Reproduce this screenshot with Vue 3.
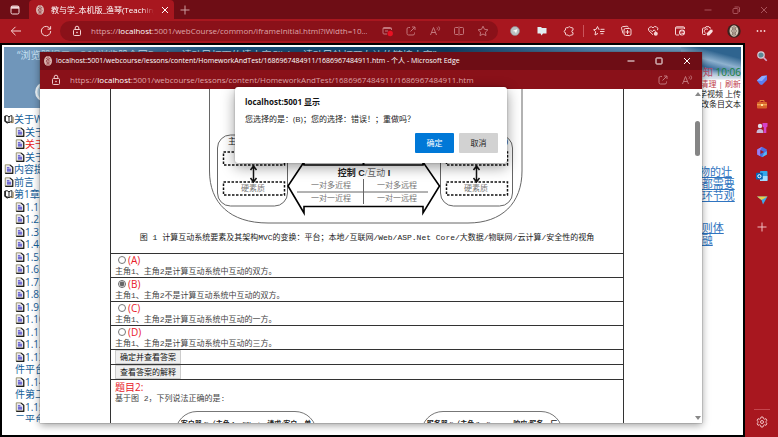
<script setup>
import { ref } from 'vue'

const picked = ref('B')

const tree = [
  { icon: 'book', level: 0, text: '关于Web' },
  { icon: 'page', level: 1, text: '关于课程' },
  { icon: 'page', level: 1, text: '关于作者', active: true },
  { icon: 'page', level: 1, text: '关于版权' },
  { icon: 'page', level: 0, text: '内容提要' },
  { icon: 'page', level: 0, text: '前言' },
  { icon: 'book', level: 0, text: '第1章' },
  { icon: 'page', level: 1, text: '1.1' },
  { icon: 'page', level: 1, text: '1.2.' },
  { icon: 'page', level: 1, text: '1.3' },
  { icon: 'page', level: 1, text: '1.4.' },
  { icon: 'page', level: 1, text: '1.5.' },
  { icon: 'page', level: 1, text: '1.6.' },
  { icon: 'page', level: 1, text: '1.7.' },
  { icon: 'page', level: 1, text: '1.8.' },
  { icon: 'page', level: 1, text: '1.9.' },
  { icon: 'page', level: 1, text: '1.10' },
  { icon: 'page', level: 1, text: '1.11' },
  { icon: 'page', level: 1, text: '1.12' },
  { icon: 'page', level: 1, text: '1.13' },
  { icon: '', level: 1, text: '件平台' },
  { icon: 'page', level: 1, text: '1.14' },
  { icon: '', level: 1, text: '件第二' },
  { icon: 'page', level: 1, text: '1.15' },
  { icon: '', level: 1, text: '二平台' }
]

const options = [
  { key: 'A', text: '主角1、主角2是计算互动系统中互动的双方。' },
  { key: 'B', text: '主角1、主角2不是计算互动系统中互动的双方。' },
  { key: 'C', text: '主角1、主角2是计算互动系统中互动的一方。' },
  { key: 'D', text: '主角1、主角2是计算互动系统中互动的三方。' }
]

const tools = ['clip', 'chat', 'puzzle', 'bar', 'favs', 'collect', 'heart', 'eframe', 'tagshot', 'avatar', 'dots']
const sideTools = ['search', 'tag', 'toolbox', 'people', 'office', 'outlook', 'drop', 'plus']
</script>

<template>
  <div class="browser">
    <svg class="defs" aria-hidden="true">
      <symbol id="i-tabs" viewBox="0 0 12 12"><rect x="2" y="2" width="8" height="8" rx="1.500" /><path d="M2 3.500h8" stroke-width="2.400" /></symbol>
      <symbol id="i-globe" viewBox="0 0 12 12"><ellipse cx="6" cy="6" rx="4" ry="5" fill="#d9b3ae" stroke="none" /><path d="M4 3l1.500 1.500L4 6l1.500 2L4.500 9.500M8 3L6.500 5 8 6.500 6.500 8 7.500 9.500M6 1v10" stroke="#8a3238" stroke-width=".7" /></symbol>
      <symbol id="i-close" viewBox="0 0 12 12"><path d="M3 3l6 6M9 3l-6 6" /></symbol>
      <symbol id="i-plus" viewBox="0 0 12 12"><path d="M6 1.500v9M1.500 6h9" /></symbol>
      <symbol id="i-min" viewBox="0 0 12 12"><path d="M2.500 6h7" /></symbol>
      <symbol id="i-max" viewBox="0 0 12 12"><rect x="3" y="3" width="6" height="6" rx=".6" /></symbol>
      <symbol id="i-restore" viewBox="0 0 12 12"><rect x="3" y="4.500" width="5" height="5" rx="1" /><path d="M4.500 3h4a1 1 0 0 1 1 1v4" /></symbol>
      <symbol id="i-back" viewBox="0 0 12 12"><path d="M11 6H1.500M5.500 1.800L1.300 6l4.200 4.200" /></symbol>
      <symbol id="i-reload" viewBox="0 0 12 12"><path d="M10.200 4A4.700 4.700 0 1 0 10.700 6M10.600 1.200V4.200H7.600" /></symbol>
      <symbol id="i-lock" viewBox="0 0 12 12"><rect x="2.500" y="4.500" width="7" height="6" rx="1" /><path d="M4.200 4.500V3a1.800 1.800 0 0 1 3.600 0v1.500" /><circle cx="6" cy="7.500" r=".5" /></symbol>
      <symbol id="i-blocked" viewBox="0 0 12 12"><path d="M6 9H3a1 1 0 0 1-1-1V3.500a1 1 0 0 1 1-1h6.500a1 1 0 0 1 1 1V5M2 3.500h8.500M4 6h3" /><circle cx="9.200" cy="8.500" r="2.700" fill="#e81123" stroke="none" /></symbol>
      <symbol id="i-share" viewBox="0 0 12 12"><path d="M5 2.500H3.500a1.500 1.500 0 0 0-1.500 1.500v4.500A1.500 1.500 0 0 0 3.500 10H8a1.500 1.500 0 0 0 1.500-1.500V7.500M7 2h3v3M10 2L5.500 6.500" /></symbol>
      <symbol id="i-read" viewBox="0 0 12 12"><path d="M1.500 10L4.500 2.500 7.500 10M2.600 7.500h3.800M8 2.500q1 1 0 2.200M9.700 1.500q1.800 2 0 4.200" /></symbol>
      <symbol id="i-split" viewBox="0 0 12 12"><path d="M5 2.500H2.500a1 1 0 0 0-1 1v5a1 1 0 0 0 1 1H5M7 2.500h2.500a1 1 0 0 1 1 1v5a1 1 0 0 1-1 1H7M6 1.500v9" /></symbol>
      <symbol id="i-star" viewBox="0 0 12 12"><path d="M6 1.200l1.500 3.100 3.400.5-2.500 2.400.6 3.400L6 9l-3 1.600.6-3.400L1.100 4.800l3.400-.5z" /></symbol>
      <symbol id="i-clip" viewBox="0 0 12 12"><circle cx="6" cy="6" r="4.500" fill="#b9c0c1" stroke="#8e8789" stroke-width=".6" /><path d="M3.500 6l5-2-1.500 4.500L6 6.500z" fill="#fff" stroke="none" /></symbol>
      <symbol id="i-chat" viewBox="0 0 12 12"><path d="M2 2h3l1 1h4.500v5.500H7L5.500 10.500 4.500 8.500H1.500V2z" fill="#e1eef2" stroke="none" /></symbol>
      <symbol id="i-puzzle" viewBox="0 0 12 12"><path d="M3.500 2.700H5a1.500 1.500 0 0 1 2.800 0H9a1 1 0 0 1 1 1V5.200a1.200 1.200 0 1 0 0 2.400V9a1 1 0 0 1-1 1H7.600a1.300 1.300 0 0 1-2.500 0H3.500a1 1 0 0 1-1-1V7.700a1.300 1.300 0 0 1 0-2.600V3.700a1 1 0 0 1 1-1z" /></symbol>
      <symbol id="i-favs" viewBox="0 0 12 12"><path d="M6.500 4.300H5.700L4.500 1.500 3.200 4.300.6 4.700 2.600 6.700 2 10l3-1.600M7.500 4.300h4M7 6.500h4.500M7.500 8.700h3" /></symbol>
      <symbol id="i-collect" viewBox="0 0 12 12"><path d="M3 8.500L1.500 3.200Q1.300 2 2.500 1.700L7 1.200Q8 1.200 8.300 2.500" /><rect x="4" y="3.500" width="7" height="7" rx="1.500" /><path d="M7.500 5v4M5.500 7h4" /></symbol>
      <symbol id="i-heart" viewBox="0 0 12 12"><path d="M6 9.800L1.900 5.800A2.500 2.500 0 0 1 6 2.900a2.500 2.500 0 0 1 4.500 2.300M3.300 4.800l2 2 1.800-2 1.800 2" /><circle cx="8.800" cy="8.700" r="2" fill="#f5d2d2" stroke="none" /></symbol>
      <symbol id="i-eframe" viewBox="0 0 12 12"><path d="M5 10H2.500a1 1 0 0 1-1-1V2.800a1 1 0 0 1 1-1h7a1 1 0 0 1 1 1V4M1.500 3h9" /><circle cx="8" cy="7.500" r="3" fill="#f8dede" stroke="none" /><path d="M6.500 7.500h3Q9.300 6 8 6T6.600 7.600 8 9.200h1.200" stroke="#a8171f" stroke-width=".8" /></symbol>
      <symbol id="i-tagshot" viewBox="0 0 12 12"><path d="M4.500 9.500H2.500a1 1 0 0 1-1-1V4a1 1 0 0 1 1-1h1.700l.8-1.300h3L8.800 3h1.200M7 4.500A2.200 2.200 0 1 0 5.500 8.300" /><path d="M6 8l3.500-3.500 2 .2.200 2L8.200 10.500H6z" fill="#f8dede" stroke="none" /></symbol>
      <symbol id="i-avatar" viewBox="0 0 14 14"><circle cx="7" cy="7" r="6.700" fill="#39221e" stroke="none" /><ellipse cx="7" cy="7" rx="4.500" ry="5.700" fill="#d5cbbb" stroke="none" /><path d="M5 3l1 2-1.500 2L6 9l-1 2.500M9 3L8 5l1.500 2L8 9l1 2.500M7 2v10" stroke="#6f5850" stroke-width=".8" /></symbol>
      <symbol id="i-dots" viewBox="0 0 12 12"><g fill="#f6d5d5" stroke="none"><circle cx="2.500" cy="6" r=".9" /><circle cx="6" cy="6" r=".9" /><circle cx="9.500" cy="6" r=".9" /></g></symbol>
      <symbol id="i-search" viewBox="0 0 12 12"><circle cx="5" cy="5" r="3.200" fill="#5b8794" stroke="#d8ccd5" stroke-width="1.200" /><path d="M7.500 7.500l3.200 3.200" stroke="#d7a9d0" stroke-width="1.600" /></symbol>
      <symbol id="i-tag" viewBox="0 0 12 12"><path d="M.8 6.500L6 2 11 1.500 11 6 6 11 4 10.500z" fill="#5a7df0" stroke="none" /><path d="M.8 6.500L6 2 11 1.500 6 7z" fill="#8fabff" stroke="none" /></symbol>
      <symbol id="i-toolbox" viewBox="0 0 12 12"><path d="M4 4V2.500h4V4" stroke="#e8833a" /><rect x="1" y="4" width="10" height="6.500" rx="1" fill="#d9632a" stroke="none" /><path d="M1 6.800h10" stroke="#f5bd62" /><rect x="5" y="6" width="2" height="2" fill="#ffe3a0" stroke="none" /></symbol>
      <symbol id="i-people" viewBox="0 0 12 12"><circle cx="4" cy="4" r="2.200" fill="#e1dce8" stroke="none" /><path d="M.5 11Q.5 7 4 7t3.500 4z" fill="#c6b9d6" stroke="none" /><path d="M6.500 1h5v3.500l-1.200 1V11H7.800V5.500l-1.300-1z" fill="#d542c8" stroke="none" /></symbol>
      <symbol id="i-office" viewBox="0 0 12 12"><path d="M6 .8l4.800 2.700v5L6 11.200 1.200 8.500v-5z" fill="#4d6fe3" stroke="none" /><path d="M6 .8L1.200 3.500v5L4 10V5z" fill="#9b7df0" stroke="none" /><path d="M4.500 3.900L8 6 4.500 8.100z" fill="#a8171f" stroke="none" /><path d="M6 11.200l4.800-2.700V5L8 7z" fill="#55b8f5" stroke="none" /></symbol>
      <symbol id="i-outlook" viewBox="0 0 12 12"><rect x="4" y="1" width="7.500" height="10" rx=".8" fill="#35a8ec" stroke="none" /><path d="M4 6h7.500v4.200a.8.800 0 0 1-.8.800H4z" fill="#a2dcff" stroke="none" /><rect x="0" y="2.800" width="6.800" height="6.800" rx=".8" fill="#0867b9" stroke="none" /><circle cx="3.400" cy="6.200" r="1.600" stroke="#fff" /></symbol>
      <symbol id="i-drop" viewBox="0 0 12 12"><path d="M1 2.500h10.500L7 10.500 5.500 6z" fill="#3fa7e8" stroke="none" /><path d="M1 2.500h10.500L5.500 6z" fill="#e9cf4b" stroke="none" /></symbol>
      <symbol id="i-gear" viewBox="0 0 12 12"><path d="M5 1h2l.4 1.600 1 .6 1.600-.5 1 1.800L9.800 5.600v.8L11 7.500l-1 1.800-1.600-.5-1 .6L7 11H5l-.4-1.600-1-.6-1.600.5-1-1.800L2.200 6.400v-.8L1 4.500l1-1.800 1.600.5 1-.6z" /><circle cx="6" cy="6" r="1.500" /></symbol>
      <symbol id="i-book" viewBox="0 0 12 12"><path d="M1 2.500Q4 1 6 3.500 7 2 9.500 2V9.500Q7 9 6 10.500 4 9 2.500 10L1 8.500z" fill="#fff" stroke="#222" stroke-width="1.200" /><path d="M1.500 2.500v6l3 2.500" stroke="#222" stroke-width="1.600" /><path d="M6 3.500v7" stroke="#222" stroke-width="1.200" /><path d="M8 10.300h3V3.500" stroke="#8a6a30" /></symbol>
      <symbol id="i-page" viewBox="0 0 12 12"><path d="M1.500 1H7L10.500 4V11H1.500z" fill="#eceaf0" stroke="#8a8458" stroke-width="1" /><path d="M7 1L10.500 4V11.300H1.500" stroke="#222" stroke-width="1.400" /><path d="M3.500 4.500h3M3.500 6.300h5M3.500 8.200h5" stroke="#4a44c8" stroke-width="1.300" /></symbol>
    </svg>

    <header class="tabstrip">
      <button class="ib" aria-label="Tab actions"><svg class="ic"><use href="#i-tabs" /></svg></button>
      <div class="tab">
        <svg class="ic"><use href="#i-globe" /></svg>
        <span class="tab-name">教与学_本机版_渔琴(Teaching&amp;L</span>
        <button class="ib" aria-label="Close tab"><svg class="ic"><use href="#i-close" /></svg></button>
      </div>
      <button class="ib add" aria-label="New tab"><svg class="ic"><use href="#i-plus" /></svg></button>
      <div class="win-ctl faded">
        <button class="ib" aria-label="Minimize"><svg class="ic"><use href="#i-min" /></svg></button>
        <button class="ib" aria-label="Restore"><svg class="ic"><use href="#i-restore" /></svg></button>
        <button class="ib" aria-label="Close"><svg class="ic"><use href="#i-close" /></svg></button>
      </div>
    </header>

    <nav class="toolbar">
      <button class="ib" aria-label="Back"><svg class="ic"><use href="#i-back" /></svg></button>
      <button class="ib" aria-label="Refresh"><svg class="ic"><use href="#i-reload" /></svg></button>
      <div class="address">
        <svg class="ic"><use href="#i-lock" /></svg>
        <span class="url">https://<b>localhost</b>:5001/webCourse/common/iframeInitial.html?iWidth=10...</span>
        <div class="addr-tools">
          <button v-for="n in ['blocked', 'share', 'read', 'split', 'star']" :key="n" class="ib" :aria-label="n"><svg class="ic"><use :href="'#i-' + n" /></svg></button>
        </div>
      </div>
      <div class="tools">
        <template v-for="n in tools" :key="n">
          <i v-if="n === 'bar'" class="bar"></i>
          <button v-else class="ib" :aria-label="n"><svg class="ic" :class="{ big: n === 'avatar' }"><use :href="'#i-' + n" /></svg></button>
        </template>
      </div>
    </nav>

    <div class="body">
      <main class="page">
        <div class="banner">
          <p class="slogan">“浏览器提示：361浏览器全网Book，请动导打下的情内容Click，请动导航打开左边的链接内容”</p>
          <svg class="emblem" viewBox="0 0 20 20"><circle cx="10" cy="10" r="8" fill="#b4d3e8" stroke="#f1f8fc" stroke-width="2" /><path d="M6 6l3 3-3 4M11 4v12" stroke="#f1f8fc" stroke-width="2" /></svg>
          <div class="status">
            <p class="clock"><span>通知</span> <time>10:06</time></p>
            <p class="links">清理 | 刷新</p>
            <p>教学视频 上传</p>
            <p>修改条目文本</p>
          </div>
        </div>
        <div class="columns">
          <ul class="tree">
            <li v-for="(t, i) in tree" :key="i" :class="{ child: t.level, active: t.active }">
              <svg v-if="t.icon" class="ti"><use :href="'#i-' + t.icon" /></svg><a href="#">{{ t.text }}</a>
            </li>
          </ul>
          <div class="article">
            <p><a href="#">物的壮<br>&nbsp;都需要<br>&nbsp;环节观</a></p>
            <p><a href="#">&nbsp;则体<br>&nbsp;融</a></p>
          </div>
        </div>
      </main>
      <aside class="side">
        <button v-for="n in sideTools" :key="n" class="ib" :aria-label="n"><svg class="ic"><use :href="'#i-' + n" /></svg></button>
        <hr>
        <button class="ib" aria-label="Settings"><svg class="ic"><use href="#i-gear" /></svg></button>
      </aside>
    </div>

    <section class="popup">
      <header class="pop-title">
        <svg class="ic"><use href="#i-globe" /></svg>
        <h1>localhost:5001/webcourse/lessons/content/HomeworkAndTest/1686967484911/1686967484911.htm - 个人 - Microsoft Edge</h1>
        <div class="win-ctl">
          <button class="ib" aria-label="Minimize"><svg class="ic"><use href="#i-min" /></svg></button>
          <button class="ib" aria-label="Maximize"><svg class="ic"><use href="#i-max" /></svg></button>
          <button class="ib" aria-label="Close"><svg class="ic"><use href="#i-close" /></svg></button>
        </div>
      </header>
      <div class="pop-url">
        <svg class="ic"><use href="#i-lock" /></svg>
        <span class="url">https://<b>localhost</b>:5001/webcourse/lessons/content/HomeworkAndTest/1686967484911/1686967484911.htm</span>
        <div class="addr-tools">
          <button class="ib" aria-label="Share"><svg class="ic"><use href="#i-share" /></svg></button>
          <button class="ib" aria-label="Read aloud"><svg class="ic"><use href="#i-read" /></svg></button>
        </div>
      </div>

      <div class="pop-body">
        <form class="quiz" @submit.prevent>
          <figure class="cell fig">
            <svg class="diagram" viewBox="0 0 340 140">
              <g fill="none" stroke="#666" stroke-width="1">
                <path d="M9.500-2V82C9.500 114 30 134 68 134H268C302 134 322 114 322 82V-2" />
                <rect x="17.500" y="46" width="70" height="71" rx="13" />
                <rect x="240.500" y="46" width="72" height="71" rx="13" />
                <path d="M97 103h131M163.500 90v25" />
              </g>
              <g fill="none" stroke="#111" stroke-width="1.500" stroke-dasharray="2.500 1.500">
                <rect x="23.500" y="63" width="61" height="13" />
                <rect x="23.500" y="93" width="61" height="13" />
                <rect x="246.500" y="63" width="61" height="13" />
                <rect x="246.500" y="93" width="61" height="13" />
              </g>
              <g fill="none" stroke="#111" stroke-width="1.500">
                <path d="M53.500 78v14M50.500 81l3-4 3 4M50.500 89l3 4 3-4" />
                <path d="M276.500 78v14M273.500 81l3-4 3 4M273.500 89l3 4 3-4" />
              </g>
              <path d="M104 73V76H223V73L239.500 97 223 124V117.500H104V124L88 97z" fill="none" stroke="#000" stroke-width="1.600" />
              <path d="M163.500 70v6" stroke="#000" stroke-width="2" />
              <g class="dt">
                <text x="28" y="55">主角1</text>
                <text x="308" y="55" text-anchor="end">主角2)</text>
                <text x="53" y="102" class="soft" text-anchor="middle">硬素质</text>
                <text x="276" y="102" class="soft" text-anchor="middle">硬素质</text>
                <text x="164" y="87" class="head" text-anchor="middle"><tspan class="strong">控制 C</tspan>/互动 <tspan class="strong">I</tspan></text>
                <text x="131" y="99" class="soft" text-anchor="middle">一对多近程</text>
                <text x="197" y="99" class="soft" text-anchor="middle">一对多远程</text>
                <text x="131" y="112" class="soft" text-anchor="middle">一对一近程</text>
                <text x="197" y="112" class="soft" text-anchor="middle">一对一远程</text>
              </g>
            </svg>
            <figcaption>图 1 计算互动系统要素及其架构MVC的变换：平台；本地/互联网/Web/ASP.Net Core/大数据/物联网/云计算/安全性的视角</figcaption>
          </figure>
          <label v-for="o in options" :key="o.key" class="cell opt">
            <span class="pick"><input v-model="picked" type="radio" name="answer" :value="o.key">({{ o.key }})</span>
            <span class="song">{{ o.text }}</span>
          </label>
          <div class="cell act"><button type="button">确定并查看答案</button></div>
          <div class="cell act"><button type="button">查看答案的解释</button></div>
          <div class="next">
            <h2>题目2:</h2>
            <p class="song">基于图 2，下列说法正确的是:</p>
            <div class="bubbles">
              <span>客户器 C（主角 1，Client，请求/客户，单</span>
              <span>服务器 S（主角 2，Server，响应/服务，厂</span>
            </div>
          </div>
        </form>
        <div class="scroll" aria-hidden="true"><i class="up"></i><i class="thumb"></i><i class="down"></i></div>
      </div>

      <div class="dialog" role="dialog" aria-labelledby="dlg">
        <h2 id="dlg">localhost:5001 显示</h2>
        <p>您选择的是：(B)；您的选择：错误！；重做吗？</p>
        <div class="dlg-act">
          <button type="button" class="primary">确定</button>
          <button type="button">取消</button>
        </div>
      </div>
    </section>
  </div>
</template>

<style>
body { background: #a8171f; overflow: hidden; }
</style>

<style scoped>
* { box-sizing: border-box; margin: 0; padding: 0; }
.browser { position: relative; display: flex; flex-direction: column; height: 100vh; font: 8px/12px "Open Sans", "Noto Sans CJK SC", sans-serif; color: #222; overflow: hidden; }
.defs { position: absolute; width: 0; height: 0; }
.ic { display: block; flex: none; width: 12px; height: 12px; fill: none; stroke: currentColor; stroke-width: 1; }
.ic.big { width: 14px; height: 14px; }
.ib { display: flex; align-items: center; justify-content: center; border: 0; background: none; color: inherit; }
button { font: inherit; }

.tabstrip { display: flex; flex: none; height: 19px; background: #6e0d15; color: #f4dcdc; }
.tabstrip > .ib:first-child { width: 29px; }
.tab { display: flex; align-items: center; width: 145px; padding: 0 3px 0 5px; gap: 5px; border-radius: 4px 4px 0 0; background: #a8171f; color: #fff; }
.tab-name { flex: 1; overflow: hidden; white-space: nowrap; mask-image: linear-gradient(90deg, #000 88%, transparent); }
.add { width: 22px; opacity: .7; }
.win-ctl { display: flex; margin-left: auto; }
.win-ctl .ib { width: 28px; }
.faded { color: #a8525a; }

.toolbar { display: flex; flex: none; align-items: center; height: 24px; padding-right: 4px; background: #a8171f; color: #f6d5d5; }
.toolbar > .ib { width: 28px; }
.toolbar > .ib:first-child { width: 32px; }
.address { display: flex; flex: 1; align-items: center; height: 20px; margin-right: 3px; padding: 0 3px 0 11px; gap: 8px; border-radius: 10px; background: #8a1119; min-width: 0; }
.url { flex: 1; overflow: hidden; white-space: nowrap; color: #dfa4a8; }
.url b { font-weight: 400; color: #fff; }
.addr-tools { display: flex; color: #c2757a; }
.addr-tools .ib { width: 24px; }
.tools { display: flex; align-items: center; }
.tools .ib { width: 27px; }
.bar { width: 1px; height: 12px; margin: 0 1px; background: #c9555c; }

.body { display: flex; flex: 1; min-height: 0; background: #a8171f; }
.page { display: flex; flex: 1; flex-direction: column; min-width: 0; padding: 2px; border: 2px solid #000; background: #fff; overflow: hidden; }
.banner { position: relative; display: flex; flex: none; justify-content: space-between; height: 61px; background: linear-gradient(180deg, transparent 0 22px, #dbe3ec 32px, #fff 33px) right / 60px 100% no-repeat, linear-gradient(15deg, #a9c4da 0 50%, #3c6f9d 62%, #8fb2cf 72%, #2f648f 85%) right / 60px 100% no-repeat, linear-gradient(90deg, #7096ba 0 6%, #1c4f7b 30%, #0f3f66 60%, #4f81ab 80%, #7ba5c6); }
.slogan { padding: 1px 0 0 13px; font-size: 10px; line-height: 14px; white-space: nowrap; color: #c6e0f2; }
.emblem { position: absolute; left: 30px; top: 34px; width: 22px; height: 22px; fill: none; }
.status { position: absolute; right: 0; top: 18px; font-size: 8px; line-height: 10px; text-align: right; white-space: nowrap; }
.clock { font-size: 10px; line-height: 14px; color: #b84a68; }
.clock time { color: #14803c; }
.links { color: #c0404c; }

.columns { display: flex; flex: 1; justify-content: space-between; min-height: 0; margin-bottom: 11px; overflow: hidden; }
.tree { display: grid; grid-auto-rows: 12px 13px; align-content: start; padding-top: 5px; list-style: none; font-size: 10px; }
.tree li { display: flex; align-items: center; white-space: nowrap; }
.tree .child { padding-left: 11px; }
.ti { flex: none; width: 10px; height: 10px; fill: none; }
.tree a { color: #14609a; text-decoration: none; }
.tree .active a { color: #e81c1c; }
.article { width: 42px; padding-top: 58px; font: 11px/12px "Liberation Serif", "Noto Sans CJK SC", serif; white-space: nowrap; }
.article p { margin-bottom: 20px; }
.article a { color: #2f74c0; }

.side { display: flex; flex: none; flex-direction: column; align-items: center; width: 33px; padding: 1px 0 4px; color: #f0bfc2; }
.side .ib { height: 24px; }
.side .ib:nth-child(8) { height: 30px; }
.side hr { width: 16px; margin: auto 0 1px; border: 0; border-top: 1px solid #c5464e; }
.side hr + .ib { height: 22px; }

.popup { position: absolute; inset: 52px 76px 14px 40px; display: flex; flex-direction: column; background: #fff; box-shadow: 0 2px 8px rgba(0, 0, 0, .4), 0 0 1px #555; }
.pop-title { display: flex; flex: none; align-items: center; height: 18px; padding: 0 1px 0 2px; gap: 2px; background: #6e0d15; color: #fff; }
h1 { font-size: 7px; font-weight: 400; white-space: nowrap; }
.pop-url { display: flex; flex: none; align-items: center; height: 19px; padding: 0 3px 0 10px; gap: 8px; background: #8a1119; color: #eec7c9; }
.pop-body { display: flex; flex: 1; min-height: 0; overflow: hidden; }

.quiz { flex: 1; margin: 0 69px 0 70px; border: solid #333; border-width: 0 1px; min-width: 0; }
.cell { border-bottom: 1px solid #333; }
.song, figcaption { font: 8px/11px "Liberation Mono", "Noto Sans CJK SC", monospace; white-space: nowrap; color: #444; }
.fig { height: 165px; overflow: hidden; }
.diagram { display: block; width: 340px; height: 140px; margin-left: 89px; }
.dt { font: 8px "Liberation Serif", "Noto Sans CJK SC", serif; fill: #222; }
.dt .soft { fill: #777; }
.dt .head { font-size: 9px; fill: #666; }
.dt .strong { font-family: "Liberation Sans", "Noto Sans CJK SC", sans-serif; font-weight: 700; fill: #222; }
figcaption { padding-top: 3px; text-align: center; color: #222; }
.opt { display: flex; flex-direction: column; height: 24px; padding-left: 4px; }
.pick { display: flex; align-items: center; height: 14px; padding-left: 3px; gap: 2px; font-size: 10px; color: #e8202a; }
.pick input { width: 8px; height: 8px; accent-color: #666; }
.act { display: flex; height: 15px; padding-left: 4px; }
.act button { padding: 0 4px; border: 1px solid #ccc; background: #efefef; color: #111; line-height: 12px; }
.next h2 { padding: 1px 0 0 4px; font-size: 10px; font-weight: 400; line-height: 12px; color: #e8202a; }
.next p { padding-left: 4px; }
.bubbles { display: flex; justify-content: space-between; padding: 7px 60px 0 64px; }
.bubbles span { width: 142px; height: 30px; padding-top: 6px; border: 1px solid #777; border-radius: 22px 22px 0 0; font: 700 7px/12px "Liberation Serif", "Noto Sans CJK SC", serif; text-align: center; white-space: nowrap; color: #222; }

.scroll { display: flex; flex: none; flex-direction: column; align-items: center; width: 9px; padding: 3px 0; }
.up, .down { border: 3px solid transparent; border-top-width: 0; border-bottom: 4px solid #888; }
.down { margin-top: auto; border-top: 4px solid #888; border-bottom-width: 0; }
.thumb { width: 5px; height: 35px; margin-top: 25px; border-radius: 3px; background: #858585; }

.dialog { position: absolute; left: 195px; top: 35px; width: 272px; padding: 9px 9px 10px 10px; border-radius: 3px; background: #fff; box-shadow: 0 4px 14px rgba(0, 0, 0, .4), 0 0 2px rgba(0, 0, 0, .3); }
.dialog h2 { font-size: 8px; font-weight: 700; line-height: 12px; color: #111; }
.dialog p { margin-top: 5px; line-height: 12px; }
.dlg-act { display: flex; justify-content: flex-end; gap: 5px; margin-top: 8px; }
.dlg-act button { width: 39px; height: 20px; border: 0; border-radius: 1px; background: #d2d2d2; color: #222; }
.dlg-act .primary { background: #0078d7; color: #fff; }
</style>
